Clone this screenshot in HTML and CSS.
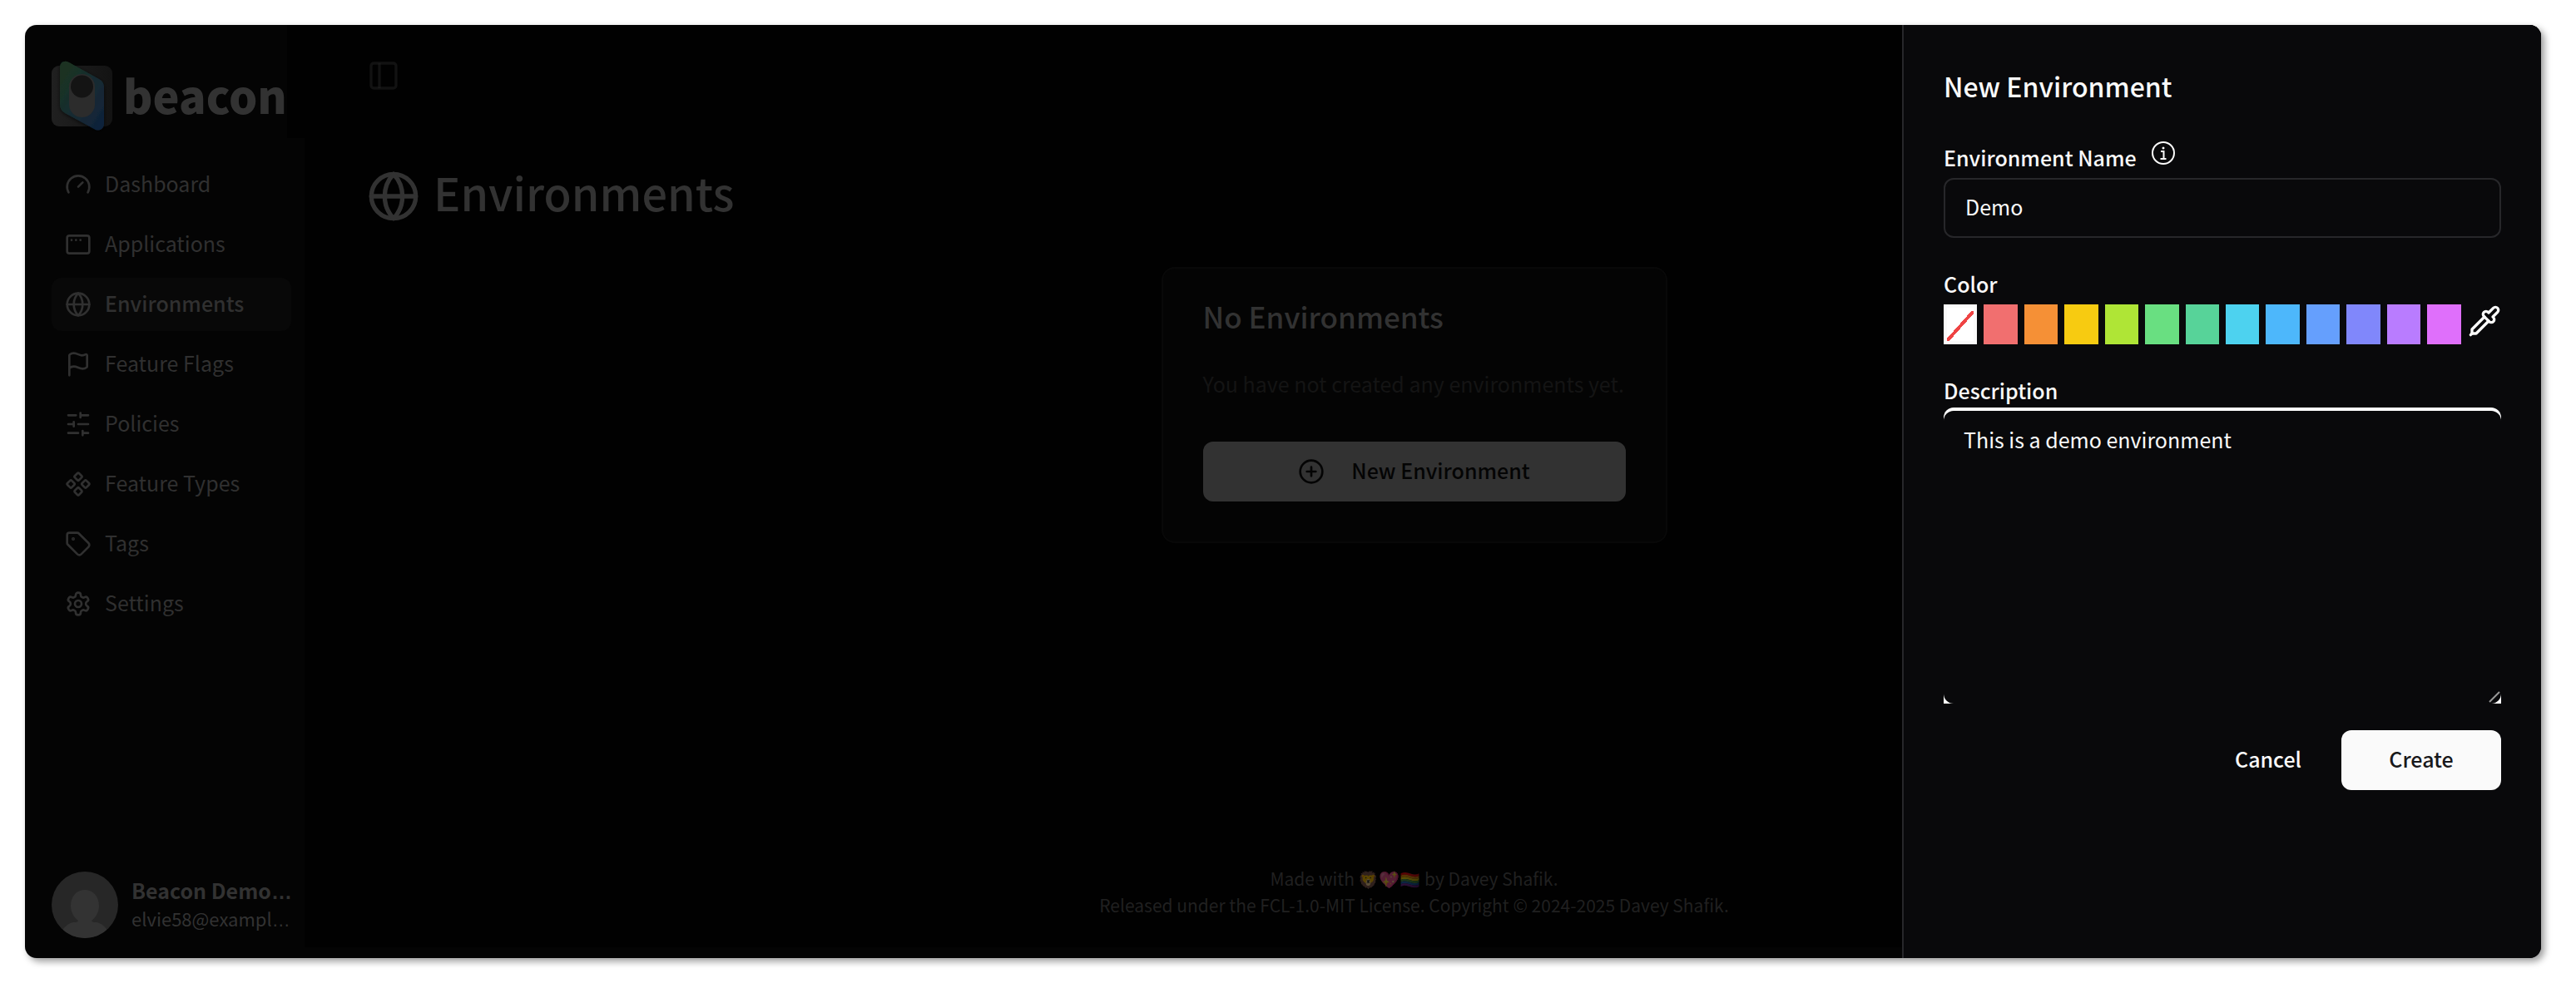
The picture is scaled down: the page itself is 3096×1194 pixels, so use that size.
FILE: index.html
```html
<!DOCTYPE html>
<html lang="en">
<head>
<meta charset="utf-8">
<title>Environments - Beacon</title>
<link rel="stylesheet" href="styles.css">
</head>
<body>
<div class="app">
  <aside class="sidebar">
    <a class="brand" href="#">
      <svg class="brand-mark" viewBox="0 0 74 84" aria-hidden="true">
        <defs>
          <linearGradient id="tile" x1="0" y1="0" x2="1" y2="0"><stop offset="0" stop-color="#202020"/><stop offset="1" stop-color="#131313"/></linearGradient>
          <linearGradient id="blade" x1="0" y1="0" x2="1" y2="1"><stop offset=".15" stop-color="#1a3323"/><stop offset=".5" stop-color="#182c31"/><stop offset=".9" stop-color="#10233a"/></linearGradient>
          <filter id="soft" x="-20%" y="-20%" width="140%" height="140%"><feDropShadow dx="0" dy="1" stdDeviation="2" flood-color="#000" flood-opacity=".7"/></filter>
        </defs>
        <rect x="0" y="6" width="73" height="73" rx="9" fill="url(#tile)"/>
        <path d="M10 8C10 2 15-1 21 2L57 22Q63 25 63 32V76C63 82 57 86 51 82L16 63Q10 59 10 53Z" fill="url(#blade)" filter="url(#soft)"/>
        <rect x="21" y="16" width="31" height="52" rx="15.500" fill="#2c2c2c"/>
        <circle cx="36.500" cy="31" r="13.500" fill="#141414"/>
      </svg>
      <span class="brand-name">beacon</span>
    </a>
    <nav class="nav">
      <a class="nav-item" href="#"><svg class="icon" viewBox="0 0 24 24"><path d="m12 14 4-4"/><path d="M3.340 19a10 10 0 1 1 17.320 0"/></svg><span class="text">Dashboard</span></a>
      <a class="nav-item" href="#"><svg class="icon" viewBox="0 0 24 24"><rect x="2" y="4" width="20" height="16" rx="2"/><path d="M6 8h.01M10 8h.01M14 8h.01"/></svg><span class="text">Applications</span></a>
      <a class="nav-item active" href="#"><svg class="icon" viewBox="0 0 24 24"><circle cx="12" cy="12" r="10"/><path d="M12 2a14.500 14.500 0 0 0 0 20 14.500 14.500 0 0 0 0-20M2 12h20"/></svg><span class="text">Environments</span></a>
      <a class="nav-item" href="#"><svg class="icon" viewBox="0 0 24 24"><path d="M4 22V4a1 1 0 0 1 .4-.8A6 6 0 0 1 8 2c3 0 5 2 7.333 2q2 0 3.067-.8A1 1 0 0 1 20 4v10a1 1 0 0 1-.4.8A6 6 0 0 1 16 16c-3 0-5-2-8-2a6 6 0 0 0-4 1.528"/></svg><span class="text">Feature Flags</span></a>
      <a class="nav-item" href="#"><svg class="icon" viewBox="0 0 24 24"><path d="M21 4h-7M10 4H3M21 12h-9M8 12H3M21 20h-5M12 20H3M14 2v4M8 10v4M16 18v4"/></svg><span class="text">Policies</span></a>
      <a class="nav-item" href="#"><svg class="icon" viewBox="0 0 24 24"><path d="M15.536 11.293a1 1 0 0 0 0 1.414l2.376 2.377a1 1 0 0 0 1.414 0l2.377-2.377a1 1 0 0 0 0-1.414l-2.377-2.377a1 1 0 0 0-1.414 0zM2.297 11.293a1 1 0 0 0 0 1.414l2.377 2.377a1 1 0 0 0 1.414 0l2.377-2.377a1 1 0 0 0 0-1.414L6.088 8.916a1 1 0 0 0-1.414 0zM8.916 17.912a1 1 0 0 0 0 1.415l2.377 2.376a1 1 0 0 0 1.414 0l2.377-2.376a1 1 0 0 0 0-1.415l-2.377-2.376a1 1 0 0 0-1.414 0zM8.916 4.674a1 1 0 0 0 0 1.414l2.377 2.376a1 1 0 0 0 1.414 0l2.377-2.376a1 1 0 0 0 0-1.414l-2.377-2.377a1 1 0 0 0-1.414 0z"/></svg><span class="text">Feature Types</span></a>
      <a class="nav-item" href="#"><svg class="icon" viewBox="0 0 24 24"><path d="M12.586 2.586A2 2 0 0 0 11.172 2H4a2 2 0 0 0-2 2v7.172a2 2 0 0 0 .586 1.414l8.704 8.704a2.426 2.426 0 0 0 3.420 0l6.580-6.580a2.426 2.426 0 0 0 0-3.420z"/><circle cx="7.500" cy="7.500" r=".5" fill="currentColor"/></svg><span class="text">Tags</span></a>
      <a class="nav-item" href="#"><svg class="icon" viewBox="0 0 24 24"><path d="M12.220 2h-.44a2 2 0 0 0-2 2v.18a2 2 0 0 1-1 1.730l-.43.25a2 2 0 0 1-2 0l-.15-.08a2 2 0 0 0-2.730.73l-.22.38a2 2 0 0 0 .73 2.730l.15.1a2 2 0 0 1 1 1.720v.51a2 2 0 0 1-1 1.740l-.15.09a2 2 0 0 0-.73 2.730l.22.38a2 2 0 0 0 2.730.73l.15-.08a2 2 0 0 1 2 0l.43.25a2 2 0 0 1 1 1.730V20a2 2 0 0 0 2 2h.44a2 2 0 0 0 2-2v-.18a2 2 0 0 1 1-1.730l.43-.25a2 2 0 0 1 2 0l.15.08a2 2 0 0 0 2.730-.73l.22-.39a2 2 0 0 0-.73-2.730l-.15-.08a2 2 0 0 1-1-1.740v-.5a2 2 0 0 1 1-1.740l.15-.09a2 2 0 0 0 .73-2.730l-.22-.38a2 2 0 0 0-2.730-.73l-.15.08a2 2 0 0 1-2 0l-.43-.25a2 2 0 0 1-1-1.730V4a2 2 0 0 0-2-2z"/><circle cx="12" cy="12" r="3"/></svg><span class="text">Settings</span></a>
    </nav>
    <div class="user">
      <svg class="avatar" viewBox="0 0 80 80" aria-hidden="true">
        <clipPath id="round"><circle cx="40" cy="40" r="40"/></clipPath>
        <g clip-path="url(#round)"><rect width="80" height="80" fill="#272727"/><path d="M40 22c10 0 17 8 17 19 0 8-4 14-9 18 1 2 3 2 6 2 6 1 11 6 14 11v10H12V72c3-5 8-10 14-11 3 0 5 0 6-2-5-4-9-10-9-18 0-11 7-19 17-19z" fill="#333"/></g>
      </svg>
      <div class="user-text">
        <div class="user-name">Beacon Demo<span class="dots">…</span></div>
        <div class="user-mail">elvie58@exampl<span class="dots">…</span></div>
      </div>
    </div>
  </aside>
  <main class="main">
    <header class="topbar">
      <button class="toggle" type="button" aria-label="Toggle sidebar"><svg viewBox="0 0 24 24"><rect x="3" y="3" width="18" height="18" rx="2"/><path d="M9 3v18"/></svg></button>
    </header>
    <div class="heading">
      <svg class="icon icon-large" viewBox="0 0 24 24"><circle cx="12" cy="12" r="10"/><path d="M12 2a14.500 14.500 0 0 0 0 20 14.500 14.500 0 0 0 0-20M2 12h20"/></svg>
      <h1>Environments</h1>
    </div>
    <section class="card">
      <h2>No Environments</h2>
      <p>You have not created any environments yet.</p>
      <button class="button card-button" type="button"><svg class="icon" viewBox="0 0 24 24"><circle cx="12" cy="12" r="10"/><path d="M8 12h8M12 8v8"/></svg><span class="text">New Environment</span></button>
    </section>
    <footer class="footer">
      <div>Made with <span class="emoji">🦁💖🏳️‍🌈</span> by Davey Shafik.</div>
      <div>Released under the FCL-1.0-MIT License. Copyright © 2024-2025 Davey Shafik.</div>
    </footer>
  </main>
  <form class="drawer">
    <h2>New Environment</h2>
    <div class="field">
      <div class="label-row">
        <label class="label" for="name">Environment Name</label>
        <svg class="info" viewBox="0 0 28 28" aria-hidden="true"><circle cx="14" cy="14" r="13"/><path d="M11 12h3.500v9M10.500 21h7"/><circle class="info-dot" cx="14" cy="8" r="1.500"/></svg>
      </div>
      <input class="input" id="name" type="text" value="Demo">
    </div>
    <div class="field">
      <div class="label" id="color-label">Color</div>
      <div class="swatches" role="radiogroup" aria-labelledby="color-label">
        <input type="radio" name="color" class="swatch none" aria-label="None" checked>
        <input type="radio" name="color" class="swatch red" aria-label="Red">
        <input type="radio" name="color" class="swatch orange" aria-label="Orange">
        <input type="radio" name="color" class="swatch yellow" aria-label="Yellow">
        <input type="radio" name="color" class="swatch lime" aria-label="Lime">
        <input type="radio" name="color" class="swatch green" aria-label="Green">
        <input type="radio" name="color" class="swatch emerald" aria-label="Emerald">
        <input type="radio" name="color" class="swatch cyan" aria-label="Cyan">
        <input type="radio" name="color" class="swatch sky" aria-label="Sky">
        <input type="radio" name="color" class="swatch blue" aria-label="Blue">
        <input type="radio" name="color" class="swatch indigo" aria-label="Indigo">
        <input type="radio" name="color" class="swatch purple" aria-label="Purple">
        <input type="radio" name="color" class="swatch fuchsia" aria-label="Fuchsia">
        <button class="picker" type="button" aria-label="Pick a color"><svg viewBox="0 0 24 24"><path d="m2 22 1-1h3l9-9"/><path d="M3 21v-3l9-9"/><path d="m15 6 3.400-3.400a2.100 2.100 0 1 1 3 3L18 9l.4.4a2.100 2.100 0 1 1-3 3l-3.800-3.800a2.100 2.100 0 1 1 3-3l.4.4Z"/></svg></button>
      </div>
    </div>
    <div class="field">
      <label class="label" for="description">Description</label>
      <div class="focus-ring">
        <textarea class="textarea" id="description">This is a demo environment</textarea>
        <svg class="grip" viewBox="0 0 16 16" aria-hidden="true"><path d="M2 14 14 2"/></svg>
      </div>
    </div>
    <div class="actions">
      <button class="button ghost" type="button"><span class="text">Cancel</span></button>
      <button class="button primary" type="submit"><span class="text">Create</span></button>
    </div>
  </form>
</div>
</body>
</html>
```
FILE: styles.css
```css
* {
  box-sizing: border-box;
}

body {
  margin: 0;
  padding: 30px 42px 42px 30px;
  background: #fff;
  font-family: "Noto Sans CJK SC", "Noto Sans", sans-serif;
  font-size: 25px;
  line-height: 40px;
}

h1, h2, p {
  margin: 0;
}

a {
  color: inherit;
  text-decoration: none;
}

button, input, textarea {
  margin: 0;
  font: inherit;
  color: inherit;
}

.app {
  display: grid;
  grid-template-columns: 336px 1fr 768px;
  min-height: calc(100vh - 72px);
  overflow: hidden;
  border-radius: 14px;
  background: #040404;
  color: #323232;
  box-shadow: 4px 4px 8px rgba(0, 0, 0, 0.4);
}

.text {
  padding-bottom: 4px;
}

.icon {
  flex: none;
  width: 32px;
  height: 32px;
  fill: none;
  stroke: currentColor;
  stroke-width: 2;
  stroke-linecap: round;
  stroke-linejoin: round;
}

.icon-large {
  width: 64px;
  height: 64px;
}

/* Sidebar */

.sidebar {
  display: flex;
  flex-direction: column;
  margin-bottom: 16px;
}

.brand {
  display: flex;
  align-items: center;
  gap: 12px;
  height: 136px;
  padding: 34px 0 0 32px;
  border-right: 21px solid #010101;
}

.brand-mark {
  flex: none;
  width: 74px;
  height: 84px;
  overflow: visible;
}

.brand-name {
  padding-bottom: 2px;
  font-size: 54px;
  line-height: 60px;
  font-weight: 900;
}

.nav {
  display: flex;
  flex-direction: column;
  gap: 8px;
  padding: 24px 16px 0 32px;
}

.nav-item {
  display: flex;
  align-items: center;
  gap: 16px;
  height: 64px;
  padding: 0 16px;
  border-radius: 12px;
  color: #303030;
}

.nav-item.active {
  background: #080808;
  font-weight: 500;
}

.user {
  display: flex;
  align-items: center;
  gap: 16px;
  margin-top: auto;
  padding: 0 16px 8px 32px;
}

.avatar {
  flex: none;
  width: 80px;
  height: 80px;
}

.user-text {
  line-height: 32px;
  white-space: nowrap;
}

.user-name {
  font-weight: 600;
}

.user-mail {
  font-size: 22px;
}

.dots {
  font-family: "Liberation Sans", sans-serif;
}

/* Main content */

.main {
  display: flex;
  flex-direction: column;
  margin-bottom: 13px;
  padding: 0 96px 35px 75px;
  background: #010101;
  grid-column: 2 / 4;
  grid-row: 1;
}

.topbar {
  padding-top: 41px;
}

.toggle {
  display: block;
  padding: 0;
  border: 0;
  background: none;
}

.toggle svg {
  display: block;
  width: 40px;
  height: 40px;
  fill: none;
  stroke: #202020;
  stroke-opacity: 0.55;
  stroke-width: 2;
}

.heading {
  display: flex;
  align-items: center;
  gap: 16px;
  margin-top: 93px;
}

.heading h1 {
  padding-bottom: 10px;
  font-size: 54px;
  line-height: 54px;
  font-weight: 500;
}

.card {
  align-self: center;
  min-width: 608px;
  margin-top: 53px;
  padding: 32px 48px 48px;
  border: 2px solid #080808;
  border-radius: 16px;
  background: #040404;
}

.card h2 {
  font-size: 35px;
  line-height: 50px;
  font-weight: 500;
}

.card p {
  margin: 36px 0 50px;
  color: #141414;
}

.button {
  display: flex;
  align-items: center;
  justify-content: center;
  height: 72px;
  border: 0;
  border-radius: 12px;
  font-weight: 500;
}

.card-button {
  gap: 32px;
  width: 100%;
  background: #323232;
  color: #040404;
}

.footer {
  margin-top: auto;
  color: #202020;
  font-size: 21px;
  line-height: 32px;
  text-align: center;
}

.emoji {
  font-family: "Noto Color Emoji", "Noto Sans CJK SC", sans-serif;
  font-size: 20px;
  line-height: 1;
  opacity: 0.35;
}

/* Drawer */

.drawer {
  grid-column: 3;
  grid-row: 1;
  padding: 48px;
  border-left: 2px solid #27272a;
  background: #09090b;
  color: #fafafa;
}

.drawer h2 {
  margin-bottom: 36px;
  font-size: 32px;
  line-height: 50px;
  font-weight: 500;
}

.field {
  margin-bottom: 30px;
}

.label-row {
  display: flex;
  align-items: center;
  gap: 18px;
}

.label {
  display: block;
  line-height: 50px;
  font-weight: 500;
}

.info {
  width: 28px;
  height: 28px;
  margin-bottom: 10px;
  fill: none;
  stroke: currentColor;
  stroke-width: 2;
}

.info-dot {
  fill: currentColor;
  stroke: none;
}

.input {
  display: block;
  width: 100%;
  height: 72px;
  padding: 0 24px 4px;
  border: 2px solid #27272a;
  border-radius: 12px;
  outline: 0;
  background: transparent;
}

.swatches {
  display: grid;
  grid-template-columns: repeat(14, 1fr);
  gap: 8px;
}

.swatch, .picker {
  width: 100%;
  height: 48px;
  margin: 0;
  padding: 0;
  border: 0;
  appearance: none;
}

.swatch.none {
  border: 4px solid #fafafa;
  background: linear-gradient(to bottom right, transparent calc(50% - 2px), #ef4444 calc(50% - 2px), #ef4444 calc(50% + 2px), transparent calc(50% + 2px)) bottom / 100% 36px no-repeat #fff;
}

.red { background: #f16f6f; }
.orange { background: #f59036; }
.yellow { background: #f7cb11; }
.lime { background: #afe536; }
.green { background: #69df81; }
.emerald { background: #57d399; }
.cyan { background: #4dd2ef; }
.sky { background: #4db7fb; }
.blue { background: #659ffd; }
.indigo { background: #8087fb; }
.purple { background: #b97cff; }
.fuchsia { background: #df6ffb; }

.picker {
  background: none;
}

.picker svg {
  display: block;
  width: 40px;
  height: 40px;
  margin-bottom: 8px;
  fill: none;
  stroke: currentColor;
  stroke-width: 2;
  stroke-linecap: round;
  stroke-linejoin: round;
}

.focus-ring {
  position: relative;
  margin-top: -4px;
  padding-top: 4px;
  border-radius: 12px 12px 0 0;
  background: #fff;
}

.textarea {
  display: block;
  width: 100%;
  height: 352px;
  padding: 14px 24px;
  border: 0;
  border-radius: 12px;
  outline: 0;
  background: #09090b;
  resize: none;
}

.grip {
  position: absolute;
  right: 0;
  bottom: 0;
  width: 16px;
  height: 16px;
  fill: none;
  stroke: #999;
  stroke-width: 2;
}

.actions {
  display: flex;
  justify-content: flex-end;
  margin-top: 32px;
}

.ghost {
  padding: 0 48px;
  background: none;
}

.primary {
  width: 192px;
  background: #fafafa;
  color: #18181b;
}
```
